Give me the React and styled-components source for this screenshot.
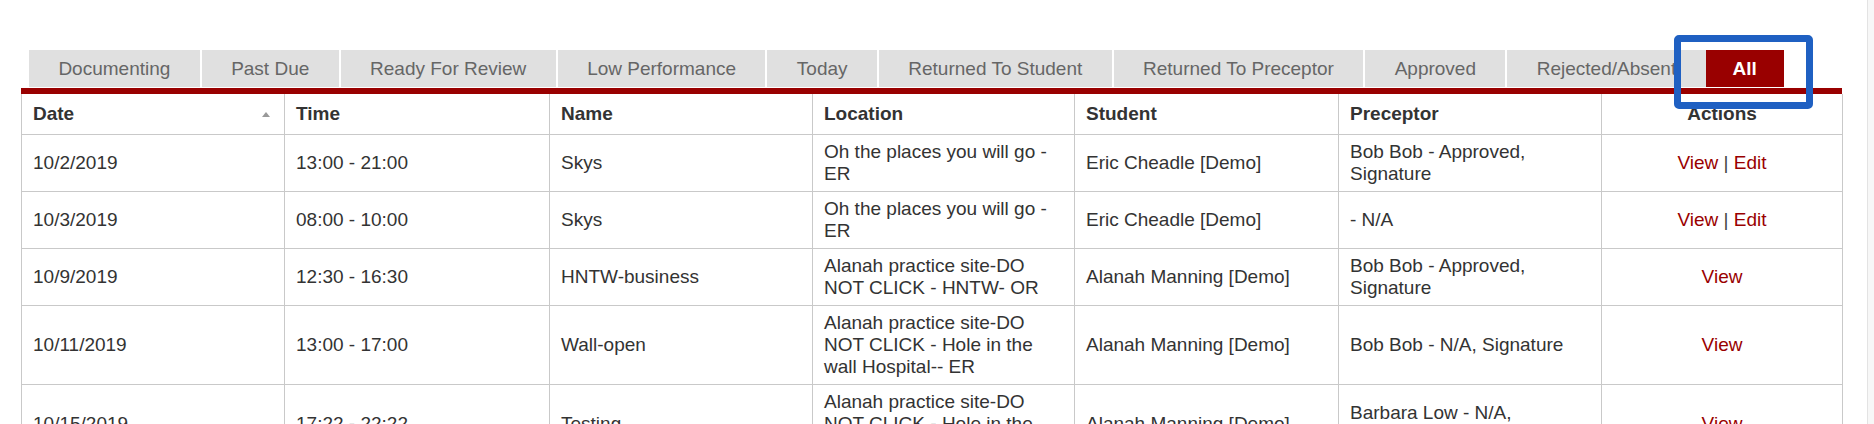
import styled, { createGlobalStyle, css } from "styled-components";

const GlobalStyle = createGlobalStyle`
  body {
    margin: 0;
    background: #fff;
    font-family: "Liberation Sans", Arial, sans-serif;
  }
`;

const tabs = [
  "Documenting",
  "Past Due",
  "Ready For Review",
  "Low Performance",
  "Today",
  "Returned To Student",
  "Returned To Preceptor",
  "Approved",
  "Rejected/Absent",
  "All",
];

const columns = [
  { label: "Date", width: 263, sortable: true },
  { label: "Time", width: 265 },
  { label: "Name", width: 263 },
  { label: "Location", width: 262 },
  { label: "Student", width: 264 },
  { label: "Preceptor", width: 263 },
  { label: "Actions", width: 241, center: true },
];

const shifts = [
  {
    date: "10/2/2019",
    time: "13:00 - 21:00",
    name: "Skys",
    location: "Oh the places you will go - ER",
    student: "Eric Cheadle [Demo]",
    preceptor: "Bob Bob - Approved, Signature",
    editable: true,
  },
  {
    date: "10/3/2019",
    time: "08:00 - 10:00",
    name: "Skys",
    location: "Oh the places you will go - ER",
    student: "Eric Cheadle [Demo]",
    preceptor: "- N/A",
    editable: true,
  },
  {
    date: "10/9/2019",
    time: "12:30 - 16:30",
    name: "HNTW-business",
    location: "Alanah practice site-DO NOT CLICK - HNTW- OR",
    student: "Alanah Manning [Demo]",
    preceptor: "Bob Bob - Approved, Signature",
  },
  {
    date: "10/11/2019",
    time: "13:00 - 17:00",
    name: "Wall-open",
    location: "Alanah practice site-DO NOT CLICK - Hole in the wall Hospital-- ER",
    student: "Alanah Manning [Demo]",
    preceptor: "Bob Bob - N/A, Signature",
  },
  {
    date: "10/15/2019",
    time: "17:22 - 22:22",
    name: "Testing",
    location: "Alanah practice site-DO NOT CLICK - Hole in the wall Hospital-- ER",
    student: "Alanah Manning [Demo]",
    preceptor: "Barbara Low - N/A, Signature",
  },
];

const App = () => {
  const activeTab = "All";

  return (
    <Page>
      <GlobalStyle />
      <Main>
        <Panel>
          <TabBar>
            {tabs.map((tab) =>
              tab === activeTab ? (
                <HighlightWrap key={tab}>
                  <Tab $active>{tab}</Tab>
                  <Highlight />
                </HighlightWrap>
              ) : (
                <Tab key={tab}>{tab}</Tab>
              )
            )}
          </TabBar>

          <Table>
            <colgroup>
              {columns.map((col) => (
                <col key={col.label} style={{ width: col.width }} />
              ))}
            </colgroup>
            <thead>
              <tr>
                {columns.map((col) => (
                  <HeadCell key={col.label} $center={col.center}>
                    {col.sortable ? (
                      <HeadInner>
                        {col.label}
                        <SortArrow />
                      </HeadInner>
                    ) : (
                      col.label
                    )}
                  </HeadCell>
                ))}
              </tr>
            </thead>
            <tbody>
              {shifts.map((row) => (
                <tr key={row.date}>
                  <Cell>{row.date}</Cell>
                  <Cell>{row.time}</Cell>
                  <Cell>{row.name}</Cell>
                  <Cell>{row.location}</Cell>
                  <Cell>{row.student}</Cell>
                  <Cell>{row.preceptor}</Cell>
                  <Cell $center>
                    <ActionLink href="#">View</ActionLink>
                    {row.editable && (
                      <>
                        <Separator> | </Separator>
                        <ActionLink href="#">Edit</ActionLink>
                      </>
                    )}
                  </Cell>
                </tr>
              ))}
            </tbody>
          </Table>
        </Panel>
      </Main>
      <ScrollGutter />
    </Page>
  );
};

const Page = styled.div`
  display: flex;
  min-height: 100vh;
`;

const Main = styled.div`
  flex: 1;
  padding: 50px 0 0 21px;
  overflow: hidden;
`;

const ScrollGutter = styled.div`
  width: 6px;
  background: #f7f7f7;
  border-left: 1px solid #e3e3e3;
`;

const Panel = styled.div`
  width: 1821px;
`;

const TabBar = styled.div`
  display: flex;
  gap: 2px;
  padding-left: 8px;
  border-bottom: 6px solid #990000;
`;

const Tab = styled.div`
  display: flex;
  align-items: center;
  height: 37px;
  margin-bottom: 1px;
  padding: 0 29.4px;
  background: #e0e0e0;
  color: #666;
  font-size: 19px;
  white-space: nowrap;
  cursor: pointer;

  ${({ $active }) =>
    $active &&
    css`
      padding: 0 27px;
      background: #990000;
      color: #fff;
      font-weight: bold;
    `}
`;

const HighlightWrap = styled.div`
  position: relative;
  display: flex;
  margin-left: -2px;
`;

const Highlight = styled.div`
  position: absolute;
  top: -15px;
  bottom: -21px;
  left: -32px;
  right: -29px;
  border: 7px solid #1f60c2;
  border-radius: 5px;
  pointer-events: none;
`;

const Table = styled.table`
  width: 1821px;
  table-layout: fixed;
  border-collapse: collapse;
  font-size: 19px;
  line-height: 22px;
  color: #333;
`;

const HeadCell = styled.th`
  padding: 9px 11px;
  border: 1px solid #c9c9c9;
  border-top: none;
  text-align: ${({ $center }) => ($center ? "center" : "left")};
  font-weight: bold;
`;

const HeadInner = styled.div`
  display: flex;
  align-items: center;
  justify-content: space-between;
`;

const SortArrow = styled.span`
  width: 0;
  height: 0;
  margin-right: 3px;
  border-left: 4px solid transparent;
  border-right: 4px solid transparent;
  border-bottom: 5px solid #999;
`;

const Cell = styled.td`
  padding: 6px 11px;
  border: 1px solid #c9c9c9;
  vertical-align: middle;
  text-align: ${({ $center }) => ($center ? "center" : "left")};
`;

const ActionLink = styled.a`
  color: #990000;
  text-decoration: none;
`;

const Separator = styled.span`
  color: #444;
  white-space: pre;
`;

export default App;
